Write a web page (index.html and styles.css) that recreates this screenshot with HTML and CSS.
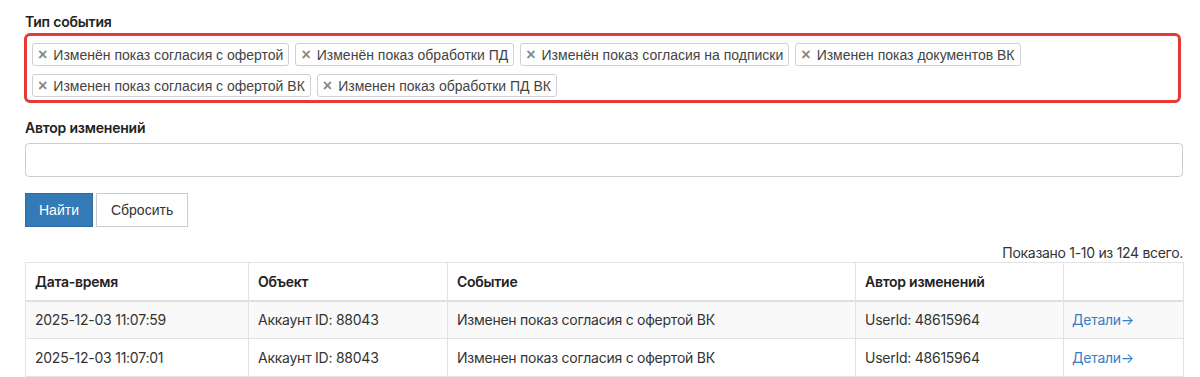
FILE: index.html
```html
<!DOCTYPE html>
<html lang="ru">
<head>
<meta charset="utf-8">
<link rel="stylesheet" href="styles.css">
</head>
<body>
<div class="page">
  <div class="field">
    <label class="label">Тип события</label>
    <div class="tagbox">
      <span class="tag"><span class="x">×</span>Изменён показ согласия с офертой</span>
      <span class="tag"><span class="x">×</span>Изменён показ обработки ПД</span>
      <span class="tag"><span class="x">×</span>Изменён показ согласия на подписки</span>
      <span class="tag"><span class="x">×</span>Изменен показ документов ВК</span>
      <span class="tag"><span class="x">×</span>Изменен показ согласия с офертой ВК</span>
      <span class="tag"><span class="x">×</span>Изменен показ обработки ПД ВК</span>
    </div>
  </div>
  <div class="field field2">
    <label class="label">Автор изменений</label>
    <div class="input"></div>
  </div>
  <div class="buttons">
    <button class="btn btn-primary">Найти</button>
    <button class="btn btn-default">Сбросить</button>
  </div>
  <div class="summary">Показано 1-10 из 124 всего.</div>
  <table class="grid">
    <colgroup>
      <col class="c1"><col class="c2"><col class="c3"><col class="c4"><col class="c5">
    </colgroup>
    <thead>
      <tr><th>Дата-время</th><th>Объект</th><th>Событие</th><th>Автор изменений</th><th></th></tr>
    </thead>
    <tbody>
      <tr class="odd"><td>2025-12-03 11:07:59</td><td>Аккаунт ID: 88043</td><td>Изменен показ согласия с офертой ВК</td><td>UserId: 48615964</td><td><a class="link">Детали→</a></td></tr>
      <tr><td>2025-12-03 11:07:01</td><td>Аккаунт ID: 88043</td><td>Изменен показ согласия с офертой ВК</td><td>UserId: 48615964</td><td><a class="link">Детали→</a></td></tr>
    </tbody>
  </table>
</div>
</body>
</html>
```
FILE: styles.css
```css
html, body { margin: 0; padding: 0; background: #fff; }
body { font-family: Inter, "Noto Sans", sans-serif; color: #333; font-size: 14px; }
.page { width: 1158px; padding: 13px 0 0 25px; }
.label { display: block; font-weight: 600; font-size: 14px; color: #222; line-height: 17px; letter-spacing: -0.2px; }
.tagbox {
  margin-top: 3px; margin-left: -1px; width: 1157px;
  border: 3px solid #e53a35; border-radius: 6px;
  padding: 7px 5px 3px 5px; box-sizing: border-box;
  display: flex; flex-wrap: wrap; gap: 8px 6px;
}
.tag {
  font-family: "Liberation Sans", Arial, sans-serif; font-size: 14px; color: #444;
  border: 1px solid #d0d0d0; border-radius: 3px; background: #fff;
  height: 23px; box-sizing: border-box; padding: 0 5px 0 5px;
  display: inline-flex; align-items: center; white-space: nowrap;
}
.tag .x { color: #888; font-weight: bold; font-size: 16px; line-height: 1; margin-right: 6px; }
.field2 { margin-top: 16px; }
.input { margin-top: 7px; height: 34px; box-sizing: border-box; border: 1px solid #ccc; border-radius: 4px; }
.buttons { margin-top: 16px; display: flex; gap: 3px; }
.btn {
  font-family: "Liberation Sans", Arial, sans-serif; font-size: 14px; height: 34px;
  padding: 0 14px; border: 1px solid #ccc; border-radius: 0; background: #fff; color: #333; margin: 0;
}
.btn-primary { background: #337ab7; border-color: #2e6da4; color: #fff; padding: 0 13px; }
.summary { margin-top: 17px; text-align: right; font-size: 14px; line-height: 17px; color: #333; letter-spacing: -0.3px; }
.grid { margin-top: 1px; width: 1158px; border-collapse: collapse; table-layout: fixed; }
.c1 { width: 223px; } .c2 { width: 199px; } .c3 { width: 408px; } .c4 { width: 208px; } .c5 { width: 120px; }
.grid th, .grid td {
  border: 1px solid #e3e3e3; height: 38px; box-sizing: border-box;
  padding: 0 9px; text-align: left; font-size: 14px; letter-spacing: -0.25px; white-space: nowrap;
}
.grid td:last-child { padding-left: 8px; }
.grid th { font-weight: 600; color: #222; border-bottom: 2px solid #e0e0e0; }
.grid td { color: #333; }
.grid tr.odd td { background: #f9f9f9; }
.link { color: #3b7dc4; text-decoration: none; }
```
